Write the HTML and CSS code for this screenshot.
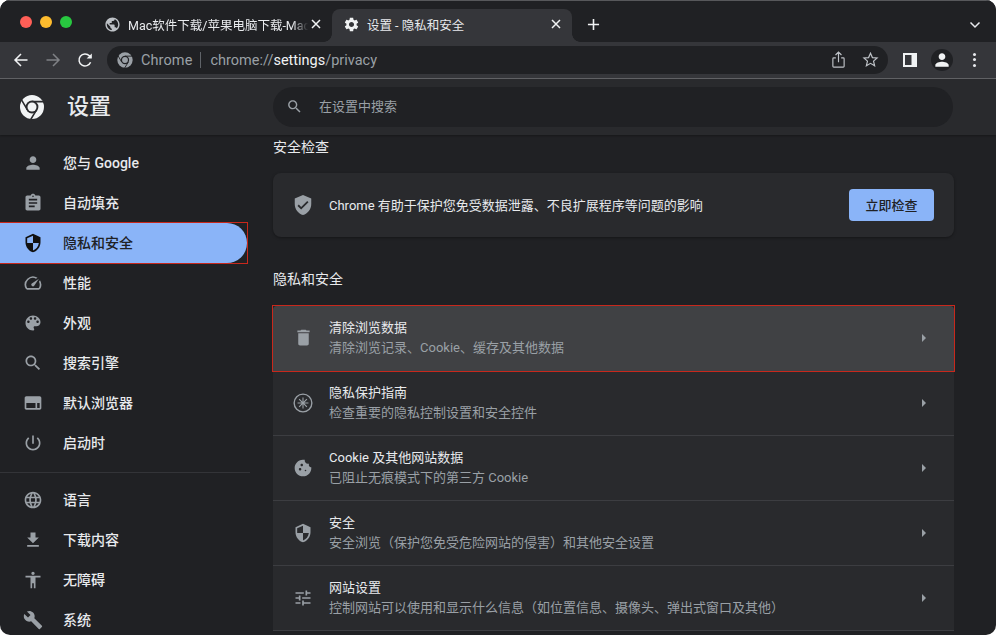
FILE: index.html
```html
<!DOCTYPE html>
<html lang="zh-CN">
<head>
<meta charset="UTF-8" />
<meta name="viewport" content="width=device-width, initial-scale=1" />
<title>设置 - 隐私和安全</title>
<link rel="stylesheet" href="styles.css">
</head>
<body>

<div class="window">

  <div class="tabstrip">
    <div class="lights">
      <span class="light red"></span>
      <span class="light yellow"></span>
      <span class="light green"></span>
    </div>
    <div class="tab">
      <svg class="tab-icon grey" viewBox="0 0 24 24"><path d="M12 2C6.48 2 2 6.48 2 12s4.48 10 10 10 10-4.48 10-10S17.52 2 12 2zm-1 17.93c-3.95-.49-7-3.85-7-7.93 0-.62.08-1.21.21-1.79L9 15v1c0 1.1.9 2 2 2v1.93zm6.9-2.54c-.26-.81-1-1.39-1.9-1.39h-1v-3c0-.55-.45-1-1-1H8v-2h2c.55 0 1-.45 1-1V7h2c1.1 0 2-.9 2-2v-.41c2.93 1.19 5 4.06 5 7.41 0 2.08-.8 3.97-2.1 5.39z"/></svg>
      <span class="tab-title fade">Mac软件下载/苹果电脑下载-Mac</span>
      <svg class="tab-close" viewBox="0 0 12 12"><path d="M2 2l8 8M10 2l-8 8"/></svg>
    </div>
    <div class="tab active">
      <svg class="tab-icon" viewBox="0 0 24 24"><path d="M19.14 12.94c.04-.3.06-.61.06-.94 0-.32-.02-.64-.07-.94l2.03-1.58c.18-.14.23-.41.12-.61l-1.92-3.32c-.12-.22-.37-.29-.59-.22l-2.39.96c-.5-.38-1.03-.7-1.62-.94l-.36-2.54c-.04-.24-.24-.41-.48-.41h-3.84c-.24 0-.43.17-.47.41l-.36 2.54c-.59.24-1.13.57-1.62.94l-2.39-.96c-.22-.08-.47 0-.59.22L2.74 8.87c-.12.21-.08.47.12.61l2.03 1.58c-.05.3-.09.63-.09.94s.02.64.07.94l-2.03 1.58c-.18.14-.23.41-.12.61l1.92 3.32c.12.22.37.29.59.22l2.39-.96c.5.38 1.03.7 1.62.94l.36 2.54c.05.24.24.41.48.41h3.84c.24 0 .44-.17.47-.41l.36-2.54c.59-.24 1.13-.56 1.62-.94l2.39.96c.22.08.47 0 .59-.22l1.92-3.32c.12-.22.07-.47-.12-.61l-2.01-1.58zM12 15.6c-1.98 0-3.6-1.62-3.6-3.6s1.62-3.6 3.6-3.6 3.6 1.62 3.6 3.6-1.62 3.6-3.6 3.6z"/></svg>
      <span class="tab-title">设置 - 隐私和安全</span>
      <svg class="tab-close" viewBox="0 0 12 12"><path d="M2 2l8 8M10 2l-8 8"/></svg>
    </div>
    <svg class="new-tab" viewBox="0 0 14 14"><path d="M7 1v12M1 7h12"/></svg>
    <svg class="tab-search" viewBox="0 0 12 12"><path d="M1.5 3.5L6 8l4.500-4.500"/></svg>
  </div>

  <div class="toolbar">
    <svg class="nav-btn" viewBox="0 0 16 16"><path d="M14.500 8H2M8 2L2 8l6 6"/></svg>
    <svg class="nav-btn off" viewBox="0 0 16 16"><path d="M1.500 8H14M8 2l6 6-6 6"/></svg>
    <svg class="nav-btn" viewBox="0 0 16 16"><path d="M13.600 10.200A6 6 0 1 1 12.400 3.800L14 5.600"/><path class="solid" d="M14.800 1.400v5.200H9.600z"/></svg>
    <div class="omnibox">
      <svg class="omni-logo" viewBox="0 0 24 24"><circle cx="12" cy="12" r="11.500" fill="#9aa0a6"/><path d="M12 6.200H23M7 15L1.500 5.600M17 15l-5.500 9" stroke="#202124" stroke-width="1.400" fill="none"/><circle cx="12" cy="12" r="6.200" fill="#202124"/><circle cx="12" cy="12" r="4.400" fill="#9aa0a6"/></svg>
      <span class="omni-site">Chrome</span>
      <span class="omni-sep"></span>
      <span class="omni-url">chrome://<b>settings</b>/privacy</span>
      <svg class="omni-act share" viewBox="0 0 16 16"><path d="M5.500 6.500H3.500a.8.8 0 0 0-.8.8v7a.8.8 0 0 0 .8.8h9a.8.8 0 0 0 .8-.8v-7a.8.8 0 0 0-.8-.8h-2M8 10.500V1M5.200 3.800L8 1l2.800 2.800"/></svg>
      <svg class="omni-act star" viewBox="0 0 24 24"><path d="M12 3.200l2.700 6.100 6.600.6-5 4.400 1.500 6.500-5.800-3.400-5.800 3.400 1.500-6.500-5-4.400 6.600-.6z"/></svg>
    </div>
    <svg class="panel-btn" viewBox="0 0 14 14"><path fill-rule="evenodd" d="M0 0h14v14H0zM2 2v10h6.500V2z"/></svg>
    <div class="avatar">
      <svg viewBox="0 0 24 24"><path d="M12 12c2.210 0 4-1.790 4-4s-1.790-4-4-4-4 1.790-4 4 1.790 4 4 4zm0 2c-2.670 0-8 1.340-8 4v2h16v-2c0-2.660-5.330-4-8-4z"/></svg>
    </div>
    <div class="dots"><span></span><span></span><span></span></div>
  </div>

  <header class="page-head">
    <div class="brand">
      <svg class="brand-logo" viewBox="0 0 24 24"><circle cx="12" cy="12" r="12" fill="#f1f3f4"/><path d="M12 6.600H24M7.300 14.700L1.200 4.300M16.700 14.700l-6.100 10" stroke="#292a2d" stroke-width="1.600" fill="none"/><circle cx="12" cy="12" r="6.400" fill="#292a2d"/><circle cx="12" cy="12" r="4.500" fill="#f1f3f4"/></svg>
      <span class="brand-name">设置</span>
    </div>
    <div class="search">
      <svg class="icon" viewBox="0 0 24 24"><path d="M15.500 14h-.790l-.280-.270C15.410 12.590 16 11.110 16 9.500 16 5.910 13.090 3 9.500 3S3 5.910 3 9.500 5.910 16 9.500 16c1.610 0 3.090-.590 4.230-1.570l.270.280v.790l5 4.990L20.490 19l-4.990-5zm-6 0C7.010 14 5 11.990 5 9.500S7.010 5 9.500 5 14 7.010 14 9.500 11.990 14 9.500 14z"/></svg>
      <span class="search-text">在设置中搜索</span>
    </div>
  </header>

  <div class="page-body">
    <nav class="sidebar">
      <a class="nav-item"><svg class="icon" viewBox="0 0 24 24"><path d="M12 12c2.210 0 4-1.790 4-4s-1.790-4-4-4-4 1.790-4 4 1.790 4 4 4zm0 2c-2.670 0-8 1.340-8 4v2h16v-2c0-2.660-5.330-4-8-4z"/></svg>您与 Google</a>
      <a class="nav-item"><svg class="icon" viewBox="0 0 24 24"><path d="M19 3h-4.180C14.400 1.840 13.300 1 12 1c-1.300 0-2.400.840-2.820 2H5c-1.100 0-2 .9-2 2v14c0 1.100.9 2 2 2h14c1.100 0 2-.9 2-2V5c0-1.100-.9-2-2-2zm-7 0c.550 0 1 .450 1 1s-.450 1-1 1-1-.450-1-1 .450-1 1-1zm2 14H7v-2h7v2zm3-4H7v-2h10v2zm0-4H7V7h10v2z"/></svg>自动填充</a>
      <div class="nav-mark">
        <a class="nav-item active"><svg class="icon" viewBox="0 0 24 24"><path d="M12 1L3 5v6c0 5.550 3.840 10.740 9 12 5.160-1.260 9-6.450 9-12V5l-9-4zm0 10.990h7c-.530 4.120-3.280 7.790-7 8.940V12H5V6.300l7-3.110v8.800z"/></svg>隐私和安全</a>
      </div>
      <a class="nav-item"><svg class="icon" viewBox="0 0 24 24"><path d="M20.380 8.570l-1.230 1.850a8 8 0 0 1-.220 7.580H5.070A8 8 0 0 1 15.580 6.850l1.850-1.230A10 10 0 0 0 3.350 19a2 2 0 0 0 1.720 1h13.850a2 2 0 0 0 1.740-1 10 10 0 0 0-.270-10.430zm-9.790 6.840a2 2 0 0 0 2.830 0l5.660-8.490-8.490 5.660a2 2 0 0 0 0 2.830z"/></svg>性能</a>
      <a class="nav-item"><svg class="icon" viewBox="0 0 24 24"><path d="M12 3c-4.970 0-9 4.030-9 9s4.030 9 9 9c.830 0 1.500-.670 1.500-1.500 0-.390-.150-.740-.390-1.010-.230-.260-.380-.610-.380-.990 0-.830.670-1.500 1.500-1.500H16c2.760 0 5-2.240 5-5 0-4.420-4.030-8-9-8zm-5.500 9c-.830 0-1.500-.670-1.500-1.500S5.670 9 6.500 9 8 9.670 8 10.500 7.330 12 6.500 12zm3-4C8.670 8 8 7.330 8 6.500S8.670 5 9.500 5s1.500.670 1.500 1.500S10.330 8 9.500 8zm5 0c-.830 0-1.500-.670-1.500-1.500S13.670 5 14.500 5s1.500.670 1.500 1.500S15.330 8 14.500 8zm3 4c-.830 0-1.500-.670-1.500-1.500S16.670 9 17.500 9s1.500.670 1.500 1.500-.670 1.500-1.500 1.500z"/></svg>外观</a>
      <a class="nav-item"><svg class="icon" viewBox="0 0 24 24"><path d="M15.500 14h-.790l-.280-.270C15.410 12.590 16 11.110 16 9.500 16 5.910 13.090 3 9.500 3S3 5.910 3 9.500 5.910 16 9.500 16c1.610 0 3.090-.590 4.230-1.570l.270.280v.790l5 4.990L20.490 19l-4.990-5zm-6 0C7.010 14 5 11.990 5 9.500S7.010 5 9.500 5 14 7.010 14 9.500 11.990 14 9.500 14z"/></svg>搜索引擎</a>
      <a class="nav-item"><svg class="icon" viewBox="0 0 24 24"><path fill-rule="evenodd" d="M4 4h16c1.100 0 2 .9 2 2v12c0 1.100-.9 2-2 2H4c-1.100 0-2-.9-2-2V6c0-1.100.9-2 2-2zm0 8v6h11v-6H4zm13 0v6h3v-6h-3z"/></svg>默认浏览器</a>
      <a class="nav-item"><svg class="icon" viewBox="0 0 24 24"><path d="M13 3h-2v10h2V3zm4.830 2.170l-1.420 1.420C17.990 7.860 19 9.810 19 12c0 3.870-3.130 7-7 7s-7-3.130-7-7c0-2.190 1.010-4.140 2.580-5.420L6.170 5.170C4.230 6.820 3 9.260 3 12c0 4.970 4.030 9 9 9s9-4.030 9-9c0-2.740-1.230-5.180-3.170-6.830z"/></svg>启动时</a>
      <div class="nav-sep"></div>
      <a class="nav-item"><svg class="icon" viewBox="0 0 24 24"><path d="M11.990 2C6.470 2 2 6.480 2 12s4.470 10 9.990 10C17.520 22 22 17.520 22 12S17.520 2 11.990 2zm6.930 6h-2.950c-.320-1.250-.780-2.450-1.380-3.560 1.840.630 3.370 1.910 4.330 3.560zM12 4.040c.830 1.200 1.480 2.530 1.910 3.960h-3.820c.430-1.430 1.080-2.760 1.910-3.960zM4.260 14C4.100 13.360 4 12.690 4 12s.1-1.360.260-2h3.380c-.080.660-.140 1.320-.140 2 0 .680.060 1.340.140 2H4.260zm.820 2h2.950c.320 1.250.780 2.450 1.380 3.560-1.840-.630-3.370-1.900-4.330-3.560zm2.950-8H5.080c.960-1.660 2.490-2.930 4.330-3.560C8.810 5.550 8.350 6.750 8.030 8zM12 19.960c-.830-1.200-1.480-2.530-1.910-3.960h3.820c-.430 1.430-1.080 2.760-1.910 3.960zM14.340 14H9.660c-.090-.660-.160-1.320-.160-2 0-.680.070-1.350.160-2h4.680c.090.650.160 1.320.160 2 0 .680-.070 1.340-.160 2zm.250 5.560c.6-1.110 1.060-2.310 1.380-3.560h2.950c-.960 1.650-2.490 2.930-4.330 3.560zM16.360 14c.080-.660.140-1.320.140-2 0-.680-.060-1.340-.140-2h3.380c.160.640.260 1.310.260 2s-.1 1.360-.260 2h-3.380z"/></svg>语言</a>
      <a class="nav-item"><svg class="icon" viewBox="0 0 24 24"><path d="M19 9h-4V3H9v6H5l7 7 7-7zM5 18v2h14v-2H5z"/></svg>下载内容</a>
      <a class="nav-item"><svg class="icon" viewBox="0 0 24 24"><path d="M12 2c1.100 0 2 .9 2 2s-.9 2-2 2-2-.9-2-2 .9-2 2-2zm9 7h-6v13h-2v-6h-2v6H9V9H3V7h18v2z"/></svg>无障碍</a>
      <a class="nav-item"><svg class="icon" viewBox="0 0 24 24"><path d="M22.700 19l-9.100-9.100c.9-2.300.4-5-1.500-6.900-2-2-5-2.400-7.400-1.300L9 6 6 9 1.600 4.700C.4 7.100.9 10.100 2.900 12.100c1.900 1.900 4.600 2.400 6.900 1.500l9.100 9.100c.4.4 1 .4 1.400 0l2.300-2.300c.5-.4.5-1.100.1-1.400z"/></svg>系统</a>
    </nav>

    <main class="content">
      <h2 class="section-title first">安全检查</h2>
      <section class="check-card">
        <svg class="icon" viewBox="0 0 24 24"><path d="M12 1L3 5v6c0 5.550 3.840 10.740 9 12 5.160-1.260 9-6.450 9-12V5l-9-4zm-2 16l-4-4 1.410-1.410L10 14.170l6.590-6.590L18 9l-8 8z"/></svg>
        <span class="check-text">Chrome 有助于保护您免受数据泄露、不良扩展程序等问题的影响</span>
        <button class="check-btn">立即检查</button>
      </section>

      <h2 class="section-title second">隐私和安全</h2>
      <section class="list-card">
        <div class="row-mark">
          <div class="row hover">
            <svg class="icon trash" viewBox="0 0 24 24"><path d="M6 19c0 1.100.9 2 2 2h8c1.100 0 2-.9 2-2V7H6v12zM19 4h-3.500l-1-1h-5l-1 1H5v2h14V4z"/></svg>
            <div class="row-text"><div class="row-title">清除浏览数据</div><div class="row-sub">清除浏览记录、Cookie、缓存及其他数据</div></div>
            <svg class="arrow" viewBox="0 0 6 10"><path d="M1 1l4 4-4 4z"/></svg>
          </div>
        </div>
        <div class="row">
          <svg class="icon" viewBox="1 1 22 22"><path fill-rule="evenodd" d="M12 1.500a10.500 10.500 0 1 0 0 21 10.500 10.500 0 0 0 0-21zm0 1.500a9 9 0 1 1 0 18 9 9 0 0 1 0-18z"/><path d="M11.400 6h1.200v4.500l3.200-3.200.9.9-3.200 3.200H18v1.200h-4.500l3.200 3.200-.9.9-3.200-3.200V18h-1.200v-4.500l-3.200 3.200-.9-.9 3.200-3.200H6v-1.200h4.500L7.300 8.200l.9-.9 3.200 3.200z"/></svg>
          <div class="row-text"><div class="row-title">隐私保护指南</div><div class="row-sub">检查重要的隐私控制设置和安全控件</div></div>
          <svg class="arrow" viewBox="0 0 6 10"><path d="M1 1l4 4-4 4z"/></svg>
        </div>
        <div class="row">
          <svg class="icon" viewBox="0 0 24 24"><path d="M21.950 10.990c-1.790-.030-3.700-1.950-2.680-4.220-2.980 1-5.770-1.590-5.190-4.560C6.950.710 2 6.580 2 12c0 5.520 4.480 10 10 10 5.890 0 10.540-5.080 9.950-11.010zM8.500 15c-.830 0-1.500-.670-1.500-1.500S7.670 12 8.500 12s1.500.670 1.500 1.500S9.330 15 8.500 15zm2-5C9.670 10 9 9.330 9 8.500S9.670 7 10.500 7s1.500.670 1.500 1.500-.670 1.500-1.500 1.500zm4.500 6c-.550 0-1-.450-1-1s.450-1 1-1 1 .450 1 1-.450 1-1 1z"/></svg>
          <div class="row-text"><div class="row-title">Cookie 及其他网站数据</div><div class="row-sub">已阻止无痕模式下的第三方 Cookie</div></div>
          <svg class="arrow" viewBox="0 0 6 10"><path d="M1 1l4 4-4 4z"/></svg>
        </div>
        <div class="row">
          <svg class="icon" viewBox="0 0 24 24"><path d="M12 1L3 5v6c0 5.550 3.840 10.740 9 12 5.160-1.260 9-6.450 9-12V5l-9-4zm0 10.990h7c-.530 4.120-3.280 7.790-7 8.940V12H5V6.300l7-3.110v8.800z"/></svg>
          <div class="row-text"><div class="row-title">安全</div><div class="row-sub">安全浏览（保护您免受危险网站的侵害）和其他安全设置</div></div>
          <svg class="arrow" viewBox="0 0 6 10"><path d="M1 1l4 4-4 4z"/></svg>
        </div>
        <div class="row">
          <svg class="icon" viewBox="0 0 24 24"><path d="M3 17v2h6v-2H3zM3 5v2h10V5H3zm10 16v-2h8v-2h-8v-2h-2v6h2zM7 9v2H3v2h4v2h2V9H7zm14 4v-2H11v2h10zm-6-4h2V7h4V5h-4V3h-2v6z"/></svg>
          <div class="row-text"><div class="row-title">网站设置</div><div class="row-sub">控制网站可以使用和显示什么信息（如位置信息、摄像头、弹出式窗口及其他）</div></div>
          <svg class="arrow" viewBox="0 0 6 10"><path d="M1 1l4 4-4 4z"/></svg>
        </div>
      </section>
    </main>
  </div>

</div>

</body>
</html>
```

FILE: styles.css
```css
html, body {
  margin: 0;
  height: 100%;
  background: #fff;
  overflow: hidden;
}
body {
  font-family: Roboto, "Noto Sans CJK SC", sans-serif;
  color: #e8eaed;
}
.window {
  width: 996px;
  height: 635px;
  border-radius: 10px;
  overflow: hidden;
  background: #202124;
  display: flex;
  flex-direction: column;
}
svg {
  display: block;
  flex: none;
}

/* tab strip */
.tabstrip {
  height: 42px;
  box-sizing: border-box;
  padding-top: 8px;
  border-top: 1px solid #57585b;
  background: #202124;
  display: flex;
  align-items: stretch;
  flex: none;
  padding-right: 15px;
}
.lights {
  width: 97px;
  flex: none;
  display: flex;
  gap: 8px;
  padding: 7px 0 0 20px;
  box-sizing: border-box;
}
.light {
  width: 12px;
  height: 12px;
  border-radius: 50%;
}
.light.red { background: #ff5f57; }
.light.yellow { background: #febc2e; }
.light.green { background: #28c840; }
.tab {
  width: 235px;
  flex: none;
  box-sizing: border-box;
  padding: 0 10px 3px 7px;
  display: flex;
  align-items: center;
  font-size: 12.5px;
  color: #e8eaed;
}
.tab.active {
  width: 240px;
  padding-left: 11px;
  background: #35363a;
  border-radius: 8px 8px 0 0;
  position: relative;
  margin-right: 15px;
}
.tab.active::before,
.tab.active::after {
  content: "";
  position: absolute;
  bottom: 0;
  width: 8px;
  height: 8px;
}
.tab.active::before {
  left: -8px;
  background: radial-gradient(circle at 0 0, #202124 7.5px, #35363a 8px);
}
.tab.active::after {
  right: -8px;
  background: radial-gradient(circle at 100% 0, #202124 7.5px, #35363a 8px);
}
.tab-icon {
  width: 17px;
  height: 17px;
  fill: #f1f3f4;
}
.tab-icon.grey {
  fill: #bdc1c6;
}
.tab-title {
  flex: 1;
  min-width: 0;
  margin-left: 7px;
  white-space: nowrap;
}
.tab-title.fade {
  -webkit-mask-image: linear-gradient(to right, #000 90%, transparent 99%);
  mask-image: linear-gradient(to right, #000 90%, transparent 99%);
}
.tab-close {
  width: 12px;
  height: 12px;
  fill: none;
  stroke: #f1f3f4;
  stroke-width: 1.500;
}
.new-tab {
  width: 13px;
  height: 13px;
  align-self: center;
  margin-top: -2px;
  fill: none;
  stroke: #f1f3f4;
  stroke-width: 1.700;
}
.tab-search {
  width: 12px;
  height: 12px;
  align-self: center;
  margin: -2px 0 0 auto;
  fill: none;
  stroke: #e8eaed;
  stroke-width: 1.500;
}

/* toolbar */
.toolbar {
  height: 37px;
  box-sizing: border-box;
  flex: none;
  background: #35363a;
  border-bottom: 1px solid #626367;
  display: flex;
  align-items: center;
  padding: 0 0 1px 13px;
}
.nav-btn {
  width: 16px;
  height: 16px;
  margin-right: 16px;
  fill: none;
  stroke: #f1f3f4;
  stroke-width: 1.500;
}
.nav-btn .solid {
  fill: #f1f3f4;
  stroke: none;
}
.nav-btn.off {
  stroke: #7f8185;
}
.omnibox {
  width: 781px;
  height: 28px;
  margin-left: -2px;
  border-radius: 14px;
  background: #202124;
  display: flex;
  align-items: center;
  box-sizing: border-box;
  padding: 0 9px 0 10px;
  font-size: 14.500px;
  color: #9aa0a6;
  flex: none;
}
.omni-logo {
  width: 16px;
  height: 16px;
}
.omni-site {
  margin: 1px 0 0 8px;
  letter-spacing: 0.1px;
}
.omni-sep {
  width: 1px;
  height: 16px;
  background: #5f6368;
  margin: 0 9px 0 8px;
}
.omni-url {
  margin-top: 1px;
}
.omni-url b {
  font-weight: 400;
  color: #f1f3f4;
}
.omni-act {
  fill: none;
  stroke: #bdc1c6;
}
.omni-act.share {
  width: 17px;
  height: 17px;
  margin-left: auto;
  stroke-width: 1.100;
}
.omni-act.star {
  width: 17px;
  height: 17px;
  margin-left: 15px;
  stroke-width: 1.700;
}
.panel-btn {
  width: 14px;
  height: 14px;
  margin-left: 15px;
  fill: #f1f3f4;
}
.avatar {
  width: 22px;
  height: 22px;
  margin-left: 14px;
  border-radius: 50%;
  background: #202124;
  display: flex;
  align-items: center;
  justify-content: center;
}
.avatar svg {
  width: 20px;
  height: 20px;
  fill: #f1f3f4;
}
.dots {
  display: flex;
  flex-direction: column;
  gap: 2.500px;
  margin-left: 20px;
}
.dots span {
  width: 3px;
  height: 3px;
  border-radius: 50%;
  background: #e8eaed;
}

/* settings header */
.page-head {
  height: 56px;
  box-sizing: border-box;
  flex: none;
  display: flex;
  align-items: center;
  background: #292a2d;
  box-shadow: 0 1px 2px rgba(0, 0, 0, 0.3);
  position: relative;
  padding-bottom: 1px;
}
.brand {
  width: 273px;
  flex: none;
  display: flex;
  align-items: center;
  padding-left: 20px;
  box-sizing: border-box;
}
.brand-logo {
  width: 24px;
  height: 24px;
}
.brand-name {
  margin-left: 23px;
  font-size: 22px;
  line-height: 28px;
  font-weight: 500;
  color: #e8eaed;
}
.search {
  width: 680px;
  height: 40px;
  border-radius: 20px;
  background: #202124;
  display: flex;
  align-items: center;
  box-sizing: border-box;
  padding-left: 13px;
  font-size: 13px;
  color: #9aa0a6;
}
.search .icon {
  width: 17px;
  height: 17px;
  fill: #9aa0a6;
  margin-right: 16px;
}
.search-text {
  padding-bottom: 2px;
}

/* sidebar */
.page-body {
  flex: 1;
  display: flex;
  min-height: 0;
}
.sidebar {
  width: 250px;
  flex: none;
  padding-top: 8px;
}
.nav-item {
  width: 247px;
  height: 40px;
  box-sizing: border-box;
  padding: 0 0 2px 23px;
  display: flex;
  align-items: center;
  font-size: 14px;
  font-weight: 500;
  color: #e8eaed;
}
.nav-item .icon {
  width: 20px;
  height: 20px;
  margin: 2px 20px 0 0;
  fill: #9aa0a6;
}
.nav-mark {
  width: 247px;
  position: relative;
}
.nav-mark::after,
.row-mark::after {
  content: "";
  position: absolute;
  inset: -1px;
  border: 1px solid #c8281c;
}
.nav-item.active {
  background: #8ab4f8;
  color: #202124;
  border-radius: 0 20px 20px 0;
}
.nav-item.active .icon {
  fill: #111;
}
.nav-sep {
  height: 1px;
  margin: 9px 0 7px;
  background: #333438;
}

/* main column */
.content {
  width: 681px;
  margin-left: 23px;
  flex: none;
}
.section-title {
  margin: 0;
  height: 22px;
  line-height: 22px;
  font-size: 14px;
  font-weight: 400;
  color: #e8eaed;
}
.section-title.first {
  padding-top: 1px;
}
.section-title.second {
  margin-top: 31px;
}
.check-card {
  margin-top: 15px;
  height: 64px;
  box-sizing: border-box;
  padding: 0 20px 0 19px;
  background: #292a2d;
  border-radius: 8px;
  box-shadow: 0 1px 3px rgba(0, 0, 0, 0.35);
  display: flex;
  align-items: center;
}
.check-card .icon {
  width: 22px;
  height: 22px;
  fill: #9aa0a6;
}
.check-text {
  margin-left: 15px;
  padding-bottom: 2px;
  font-size: 13px;
  color: #e8eaed;
}
.check-btn {
  margin-left: auto;
  width: 85px;
  height: 32px;
  border: none;
  border-radius: 4px;
  background: #8ab4f8;
  color: #202124;
  font-family: inherit;
  font-size: 13px;
  font-weight: 500;
  padding: 0 0 2px;
}
.list-card {
  margin-top: 16px;
  background: #292a2d;
  border-radius: 8px 8px 0 0;
}
.row {
  height: 65px;
  box-sizing: border-box;
  padding: 0 20px;
  border-bottom: 1px solid #3c3d41;
  display: flex;
  align-items: center;
}
.row-mark {
  position: relative;
  background: #202124;
}
.row.hover {
  background: #404144;
  border-bottom: none;
  border-radius: 4px 4px 0 0;
  padding-bottom: 2px;
}
.row .icon {
  width: 20px;
  height: 20px;
  fill: #9aa0a6;
}
.row .icon.trash {
  width: 21px;
  height: 21px;
  margin-right: -1px;
}
.row-text {
  margin-left: 16px;
  flex: 1;
  font-size: 13px;
  line-height: 20px;
}
.row-title {
  color: #e8eaed;
  font-weight: 400;
}
.row-sub {
  color: #9aa0a6;
}
.arrow {
  width: 6px;
  height: 10px;
  margin-right: 7px;
  fill: #9aa0a6;
}
```
